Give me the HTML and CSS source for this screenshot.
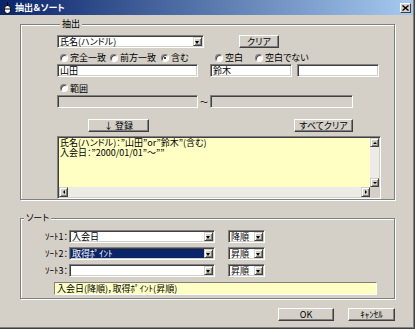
FILE: index.html
```html
<!DOCTYPE html>
<html>
<head>
<meta charset="utf-8">
<meta name="viewport" content="width=device-width, initial-scale=1">
<link rel="stylesheet" href="styles.css">
</head>
<body>
<div class="window">
  <div class="titlebar">
    <svg class="app-icon" width="9" height="12" viewBox="0 0 9 12">
      <rect x="1.5" y="3.5" width="6" height="8" rx="3" fill="#fff" stroke="#000"/>
      <path d="M4.5 0v3.5M1.5 7h6" stroke="#000" fill="none"/>
    </svg>
    <span class="title">抽出＆ソート</span>
    <span class="close">
      <svg width="7" height="6" viewBox="0 0 7 6"><path d="M0.5 0.5l6 5M6.5 0.5l-6 5" stroke="#000" stroke-width="1.4"/></svg>
    </span>
  </div>

  <fieldset class="group extract">
    <legend>抽出</legend>
    <div class="row row-top">
      <div class="combo combo-field"><span class="combo-text">氏名(ハンドル)</span><span class="drop"></span></div>
      <button class="btn btn-clear">クリア</button>
    </div>
    <div class="row radios">
      <label class="opt"><span class="radio"></span>完全一致</label>
      <label class="opt"><span class="radio"></span>前方一致</label>
      <label class="opt"><span class="radio checked"></span>含む</label>
      <label class="opt"><span class="radio"></span>空白</label>
      <label class="opt"><span class="radio"></span>空白でない</label>
    </div>
    <div class="row inputs">
      <div class="edit edit-main">山田</div>
      <div class="edit edit-or">鈴木</div>
      <div class="edit edit-or2"></div>
    </div>
    <div class="row range">
      <label class="opt"><span class="radio"></span>範囲</label>
    </div>
    <div class="row range-inputs">
      <div class="edit edit-main disabled"></div>
      <span class="tilde">～</span>
      <div class="edit edit-to disabled"></div>
    </div>
    <div class="row actions">
      <button class="btn btn-add">↓ 登録</button>
      <button class="btn btn-clear-all">すべてクリア</button>
    </div>
    <div class="memo">
      <div class="memo-text">氏名(ハンドル)：”山田”or”鈴木”(含む)<br>入会日：”2000/01/01”～””</div>
      <div class="vscroll">
        <span class="sb-btn"><span class="tri up"></span></span>
        <span class="sb-track"></span>
        <span class="sb-btn"><span class="tri down"></span></span>
      </div>
      <div class="hscroll">
        <span class="sb-btn"><span class="tri left"></span></span>
        <span class="sb-track"></span>
        <span class="sb-btn"><span class="tri right"></span></span>
      </div>
      <div class="sb-corner"></div>
    </div>
  </fieldset>

  <fieldset class="group sort">
    <legend>ソート</legend>
    <div class="sort-row">
      <span class="sort-label">ｿｰﾄ1：</span>
      <div class="combo combo-key"><span class="combo-text">入会日</span><span class="drop"></span></div>
      <div class="combo combo-order"><span class="combo-text">降順</span><span class="drop"></span></div>
    </div>
    <div class="sort-row">
      <span class="sort-label">ｿｰﾄ2：</span>
      <div class="combo combo-key"><span class="combo-text selected">取得ﾎﾟｲﾝﾄ</span><span class="drop"></span></div>
      <div class="combo combo-order"><span class="combo-text">昇順</span><span class="drop"></span></div>
    </div>
    <div class="sort-row">
      <span class="sort-label">ｿｰﾄ3：</span>
      <div class="combo combo-key"><span class="combo-text"></span><span class="drop"></span></div>
      <div class="combo combo-order"><span class="combo-text">昇順</span><span class="drop"></span></div>
    </div>
    <div class="summary">入会日(降順)，取得ﾎﾟｲﾝﾄ(昇順)</div>
  </fieldset>

  <div class="footer">
    <button class="btn btn-ok">OK</button>
    <button class="btn btn-cancel">ｷｬﾝｾﾙ</button>
  </div>
</div>
</body>
</html>
```

FILE: styles.css
```css
* {
  box-sizing: border-box;
}

html, body {
  margin: 0;
}

body {
  font-family: "Noto Sans CJK JP", "Noto Sans", sans-serif;
  font-size: 9px;
  font-feature-settings: "palt";
  color: #000;
  background: #d4d0c8;
}

.window {
  width: 415px;
  height: 329px;
  background: #d4d0c8;
  border-right: 1px solid #404040;
  border-bottom: 1px solid #404040;
  box-shadow: inset -1px -1px 0 #808080;
  overflow: hidden;
}

.titlebar {
  height: 15px;
  margin-right: 1px;
  padding-left: 3px;
  display: flex;
  align-items: center;
  background: linear-gradient(to right, #0a246a, #a6caf0);
  color: #fff;
  font-weight: bold;
}

.app-icon {
  margin-right: 3px;
}

.title {
  flex: 1;
  line-height: 15px;
}

.close {
  width: 11px;
  height: 10px;
  margin-right: 2px;
  display: flex;
  align-items: center;
  justify-content: center;
  background: #d4d0c8;
  border: 1px solid;
  border-color: #fff #404040 #404040 #fff;
}

/* group boxes */
.group {
  margin: 3px 0 0 20px;
  width: 375px;
  min-width: 0;
  padding: 0;
  border: 1px solid #808080;
  box-shadow: inset 1px 1px 0 #fff, 1px 1px 0 #fff;
}

.group legend {
  margin-left: 3px;
  padding: 0 2px;
  height: 12px;
  line-height: 12px;
  background: #d4d0c8;
}

.extract {
  padding: 5px 0 0 36px;
}

.row {
  display: flex;
  align-items: center;
}

.row-top {
  height: 13px;
}

.radios {
  margin-top: 3px;
  height: 12px;
  display: grid;
  grid-template-columns: 50px 51px 54px 40px auto;
  padding-left: 3px;
}

.inputs {
  margin-top: 1px;
  height: 13px;
}

.range {
  margin-top: 5px;
  height: 12px;
  padding-left: 3px;
}

.range-inputs {
  margin-top: 1px;
  height: 13px;
}

.actions {
  margin-top: 11px;
  height: 13px;
}

/* controls */
.combo, .edit {
  height: 13px;
  padding: 1px;
  border: 1px solid;
  border-color: #808080 #fff #fff #808080;
  box-shadow: inset 1px 1px 0 #404040, inset -1px -1px 0 #d4d0c8;
  background: #fff;
}

.combo {
  display: flex;
}

.combo-text {
  flex: 1;
  padding-left: 1px;
  line-height: 9px;
  white-space: nowrap;
}

.combo-text.selected {
  background: #0a246a;
  color: #fff;
}

.drop {
  width: 9px;
  height: 9px;
  position: relative;
  background: #d4d0c8;
  border: 1px solid;
  border-color: #d4d0c8 #404040 #404040 #d4d0c8;
  box-shadow: inset 1px 1px 0 #fff, inset -1px -1px 0 #808080;
}

.drop::after {
  content: "";
  position: absolute;
  left: 1px;
  top: 3px;
  border-style: solid;
  border-width: 3px 2.5px 0 2.5px;
  border-color: #000 transparent transparent transparent;
}

.edit {
  padding-left: 2px;
  line-height: 9px;
}

.edit.disabled {
  background: #d4d0c8;
}

.combo-field {
  width: 147px;
}

.edit-main {
  width: 141px;
}

.edit-or {
  width: 82px;
  margin-left: 12px;
}

.edit-or2 {
  width: 82px;
  margin-left: 5px;
}

.edit-to {
  width: 143px;
}

.tilde {
  width: 12px;
  text-align: center;
  line-height: 13px;
  font-size: 8px;
}

.btn {
  height: 13px;
  padding: 0;
  font: inherit;
  line-height: 11px;
  color: #000;
  background: #d4d0c8;
  border: 1px solid;
  border-color: #fff #404040 #404040 #fff;
  box-shadow: inset -1px -1px 0 #808080;
}

.btn-clear {
  width: 40px;
  margin-left: 35px;
}

.btn-add {
  width: 61px;
  margin-left: 31px;
}

.btn-clear-all {
  width: 59px;
  margin-left: 145px;
}

.opt {
  display: flex;
  align-items: center;
  gap: 2px;
  white-space: nowrap;
}

.radio {
  width: 8px;
  height: 8px;
  border-radius: 50%;
  border: 1px solid;
  border-color: #808080 #fff #fff #808080;
  box-shadow: inset 1px 1px 0 #404040;
  background: #fff;
  display: flex;
  align-items: center;
  justify-content: center;
}

.radio.checked::after {
  content: "";
  width: 2px;
  height: 2px;
  border-radius: 50%;
  background: #000;
}

/* memo with scrollbars */
.memo {
  margin-top: 4px;
  width: 324px;
  height: 63px;
  padding: 1px;
  display: grid;
  grid-template-columns: 1fr 9px;
  grid-template-rows: 1fr 10px;
  border: 1px solid;
  border-color: #808080 #fff #fff #808080;
  box-shadow: inset 1px 1px 0 #404040, inset -1px -1px 0 #d4d0c8;
  background: #ffffc4;
}

.memo-text {
  padding: 0 1px;
  line-height: 10px;
  white-space: nowrap;
}

.vscroll, .hscroll {
  display: flex;
  background: #ecebe5;
}

.vscroll {
  flex-direction: column;
}

.sb-track {
  flex: 1;
}

.sb-btn {
  width: 9px;
  height: 9px;
  flex: none;
  display: flex;
  align-items: center;
  justify-content: center;
  background: #d4d0c8;
  border: 1px solid;
  border-color: #d4d0c8 #404040 #404040 #d4d0c8;
  box-shadow: inset 1px 1px 0 #fff, inset -1px -1px 0 #808080;
}

.hscroll .sb-btn {
  height: 10px;
}

.sb-corner {
  background: #d4d0c8;
}

.tri {
  width: 0;
  height: 0;
  border-style: solid;
}

.tri.up {
  border-width: 0 2px 2px 2px;
  border-color: transparent transparent #000 transparent;
}

.tri.down {
  border-width: 2px 2px 0 2px;
  border-color: #000 transparent transparent transparent;
}

.tri.left {
  border-width: 2px 2px 2px 0;
  border-color: transparent #000 transparent transparent;
}

.tri.right {
  border-width: 2px 0 2px 2px;
  border-color: transparent transparent transparent #000;
}

/* sort box */
.sort {
  margin-top: 12px;
  padding: 6px 0 3px 0;
}

.sort-row {
  display: flex;
  height: 13px;
  margin-bottom: 4px;
}

.sort-row:nth-child(4) {
  margin-bottom: 5px;
}

.sort-label {
  width: 48px;
  padding-right: 1px;
  text-align: right;
  line-height: 13px;
}

.combo-key {
  width: 146px;
}

.combo-order {
  width: 37px;
  margin-left: 13px;
}

.summary {
  margin-left: 33px;
  width: 323px;
  height: 13px;
  padding-left: 2px;
  line-height: 11px;
  background: #ffffc4;
  border: 1px solid;
  border-color: #808080 #fff #fff #808080;
}

.footer {
  display: flex;
  gap: 14px;
  margin: 9px 0 0 278px;
}

.btn-ok {
  width: 56px;
}

.btn-cancel {
  width: 47px;
}
```
